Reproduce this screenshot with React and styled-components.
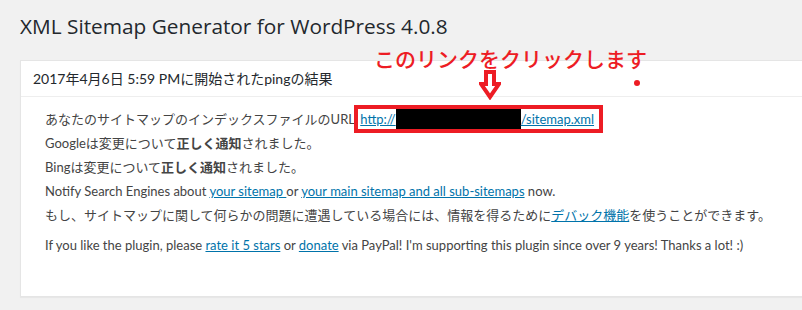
import React from 'react';
import styled, { createGlobalStyle } from 'styled-components';

const GlobalStyle = createGlobalStyle`
  html, body {
    margin: 0;
    padding: 0;
    background: #f1f1f1;
  }
  body {
    font-family: Lato, "Noto Sans CJK JP", sans-serif;
    color: #444;
    overflow: hidden;
  }
`;

const Page = styled.div`
  position: relative;
  width: 802px;
  height: 310px;
  padding: 14px 0 0 20px;
  box-sizing: border-box;
`;

const Title = styled.h2`
  margin: 0 0 22px;
  font-family: "Open Sans", sans-serif;
  font-size: 20.8px;
  font-weight: 400;
  line-height: 24px;
  color: #23282d;
`;

const Panel = styled.div`
  background: #fff;
  border: 1px solid #e5e5e5;
  border-right: none;
  box-shadow: 0 1px 1px rgba(0, 0, 0, 0.04);
`;

const PanelHead = styled.h3`
  margin: 0;
  padding: 8px 12px;
  font-size: 14px;
  font-weight: 400;
  line-height: 19px;
  color: #23282d;
  border-bottom: 1px solid #eee;
`;

const PanelBody = styled.div`
  padding: 10px 12px 39px 24px;
  font-size: 13px;
`;

const Line = styled.div`
  line-height: 24px;
  white-space: nowrap;
  margin-top: ${({ $gap }) => $gap || 0}px;
`;

const Link = styled.a`
  color: #0073aa;
  text-decoration: underline;
  cursor: pointer;
`;

const Boxed = styled.span`
  position: relative;
  display: inline-block;
  margin: -4px 0 -4px -4px;
  padding: 0 5px 0 2px;
  border: 4px solid #ed1c24;
  line-height: 18px;
`;

const Redacted = styled.span`
  display: inline-block;
  width: 125px;
  height: 20px;
  vertical-align: -5px;
  background: #000;
`;

const Note = styled.div`
  position: absolute;
  left: 374px;
  top: 43px;
  font-size: 21px;
  font-weight: 500;
  line-height: 30px;
  color: #ed1c24;
  font-family: "Noto Sans CJK JP", sans-serif;
  white-space: nowrap;
`;

const Arrow = styled.svg`
  position: absolute;
  left: 479px;
  top: 70px;
`;

const Dot = styled.span`
  position: absolute;
  left: 634px;
  top: 80px;
  width: 6px;
  height: 6px;
  border-radius: 50%;
  background: #ed1c24;
`;

export default function App() {
  return (
    <>
      <GlobalStyle />
      <Page>
        <Title>XML Sitemap Generator for WordPress 4.0.8</Title>
        <Panel>
          <PanelHead>2017年4月6日 5:59 PMに開始されたpingの結果</PanelHead>
          <PanelBody>
            <Line>
              あなたのサイトマップのインデックスファイルのURL:
              <Boxed>
                <Link>
                  http://<Redacted />/sitemap.xml
                </Link>
              </Boxed>
            </Line>
            <Line>
              Googleは変更について<b>正しく通知</b>されました。
            </Line>
            <Line>
              Bingは変更について<b>正しく通知</b>されました。
            </Line>
            <Line>
              Notify Search Engines about <Link>your sitemap </Link> or{' '}
              <Link>your main sitemap and all sub-sitemaps</Link> now.
            </Line>
            <Line>
              もし、サイトマップに関して何らかの問題に遭遇している場合には、情報を得るために
              <Link>デバック機能</Link>を使うことができます。
            </Line>
            <Line $gap={6}>
              If you like the plugin, please <Link>rate it 5 stars</Link> or{' '}
              <Link>donate</Link> via PayPal! I'm supporting this plugin since over 9 years!
              Thanks a lot! :)
            </Line>
          </PanelBody>
        </Panel>
        <Note>このリンクをクリックします</Note>
        <Arrow width="22" height="30" viewBox="0 0 22 30">
          <polygon
            points="7,2 15,2 15,14 20,14 11,27 2,14 7,14"
            fill="#fff"
            stroke="#ed1c24"
            strokeWidth="4"
            strokeLinejoin="miter"
          />
        </Arrow>
        <Dot />
      </Page>
    </>
  );
}
